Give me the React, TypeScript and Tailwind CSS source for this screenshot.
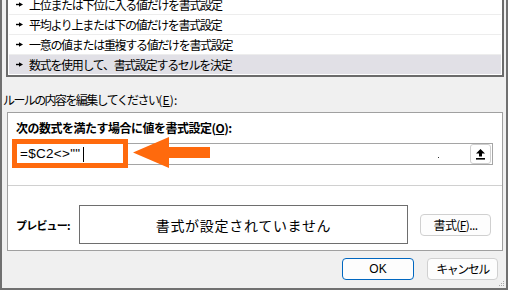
import React from "react";

const rules = [
  "上位または下位に入る値だけを書式設定",
  "平均より上または下の値だけを書式設定",
  "一意の値または重複する値だけを書式設定",
  "数式を使用して、書式設定するセルを決定",
];

function Marker() {
  return (
    <svg width="7" height="5" viewBox="0 0 7 5" className="shrink-0">
      <rect x="0" y="1.8" width="4" height="1.4" fill="#000" />
      <polygon points="3,0.3 7,2.5 3,4.7" fill="#000" />
    </svg>
  );
}

function CollapseIcon() {
  return (
    <svg width="9" height="11" viewBox="0 0 9 11">
      <polygon points="4.5,0 9,4.5 6,4.5 6,7.5 3,7.5 3,4.5 0,4.5" fill="#000" />
      <rect x="0" y="9" width="9" height="1.6" fill="#000" />
    </svg>
  );
}

export default function App() {
  return (
    <div className="relative h-[290px] w-[508px] overflow-hidden border-x-2 border-b-2 border-[#707070] bg-[#f0f0f0] font-['Noto_Sans_CJK_JP',sans-serif] text-black">
      {/* rule type list, scrolled to the bottom */}
      <div className="ml-[4px] w-[498px] overflow-hidden border-x-2 border-b-2 border-[#6b6b6b] bg-white px-[1px] pb-[1px]">
        <div className="mt-[-5px]">
          {rules.map((rule, i) => (
            <div
              key={rule}
              className={
                i === rules.length - 1
                  ? "flex h-[19px] items-center gap-[6px] bg-[#e1e0e6] pl-[7px]"
                  : "flex h-[20px] items-center gap-[6px] border-b border-[#ededed] pl-[7px]"
              }
            >
              <Marker />
              <span className="text-[12px] leading-[19px] tracking-[-1.3px]">{rule}</span>
            </div>
          ))}
        </div>
      </div>

      <div className="mt-[15px] pl-[1px] text-[12px] leading-[16px]">
        <span className="tracking-[-1.6px]">ルールの内容を編集してください</span>
        <span className="tracking-[0.2px]">
          (<span className="underline">E</span>):
        </span>
      </div>

      <div className="ml-[5px] mt-[4px] w-[496px] border border-[#a0a0a0] bg-white pb-[6px]">
        <div className="pl-[8px] pt-[7px] text-[12px] font-bold leading-[16px] tracking-[-0.5px]">
          次の数式を満たす場合に値を書式設定(<span className="underline">O</span>):
        </div>

        <div className="relative ml-[6px] mt-[7px] flex h-[22px] w-[479px] items-center border border-[#a5a5a5] bg-white pl-[5px]">
          <span className="font-['Liberation_Sans',sans-serif] text-[13.5px] leading-[16px] tracking-[0.3px]">=$C2&lt;&gt;""</span>
          <span className="ml-[3px] h-[15px] w-px bg-black" />
          <span className="absolute left-[423px] top-[13px] h-px w-px bg-[#333]" />
          <button className="ml-auto mr-px flex h-[20px] w-[21px] items-center justify-center rounded-[3px] border border-[#cfcfcf] bg-white">
            <CollapseIcon />
          </button>
        </div>

        <div className="mt-[20px] h-px w-full bg-[#d0d0d0]" />

        <div className="mt-[19px] flex items-center">
          <div className="w-[71px] pl-[8px] text-[11px] font-bold leading-[16px] tracking-[-0.8px]">プレビュー:</div>
          <div className="flex h-[39px] w-[329px] items-center justify-center border border-[#6e6e6e] text-[14px] leading-[18px] tracking-[0.7px]">
            書式が設定されていません
          </div>
          <button className="ml-[12px] flex h-[22px] w-[71px] items-center justify-center rounded-[4px] border border-[#d0d0d0] bg-[#fdfdfd] text-[12px] leading-[16px] tracking-[-0.6px]">
            書式(<span className="underline">F</span>)...
          </button>
        </div>
      </div>

      <div className="mt-[7px] flex justify-end gap-[13px] pr-[8px]">
        <button className="flex h-[22px] w-[72px] items-center justify-center rounded-[4px] border-[1.5px] border-[#0067c0] bg-[#fdfdfd] font-['Liberation_Sans',sans-serif] text-[12px] leading-[16px]">
          OK
        </button>
        <button className="flex h-[22px] w-[71px] items-center justify-center rounded-[4px] border border-[#d0d0d0] bg-[#fdfdfd] text-[12px] leading-[16px] tracking-[-1.5px]">
          キャンセル
        </button>
      </div>

      {/* annotation: orange frame and arrow over the formula field */}
      <div className="absolute left-[10px] top-[139px] h-[29px] w-[116px] border-[5px] border-[#ff6a0d]" />
      <svg className="absolute left-[131px] top-[137px]" width="77" height="31" viewBox="0 0 77 31">
        <polygon points="0,15.5 36,0 36,10 77,10 77,21 36,21 36,31" fill="#ff6a0d" />
      </svg>

      {/* resize grip */}
      <svg className="absolute bottom-[1px] right-[1px]" width="7" height="7" viewBox="0 0 7 7">
        <rect x="5" y="1" width="1" height="1" fill="#a8a8a8" />
        <rect x="3" y="3" width="1" height="1" fill="#a8a8a8" />
        <rect x="5" y="3" width="1" height="1" fill="#a8a8a8" />
        <rect x="1" y="5" width="1" height="1" fill="#a8a8a8" />
        <rect x="3" y="5" width="1" height="1" fill="#a8a8a8" />
        <rect x="5" y="5" width="1" height="1" fill="#a8a8a8" />
      </svg>
    </div>
  );
}
